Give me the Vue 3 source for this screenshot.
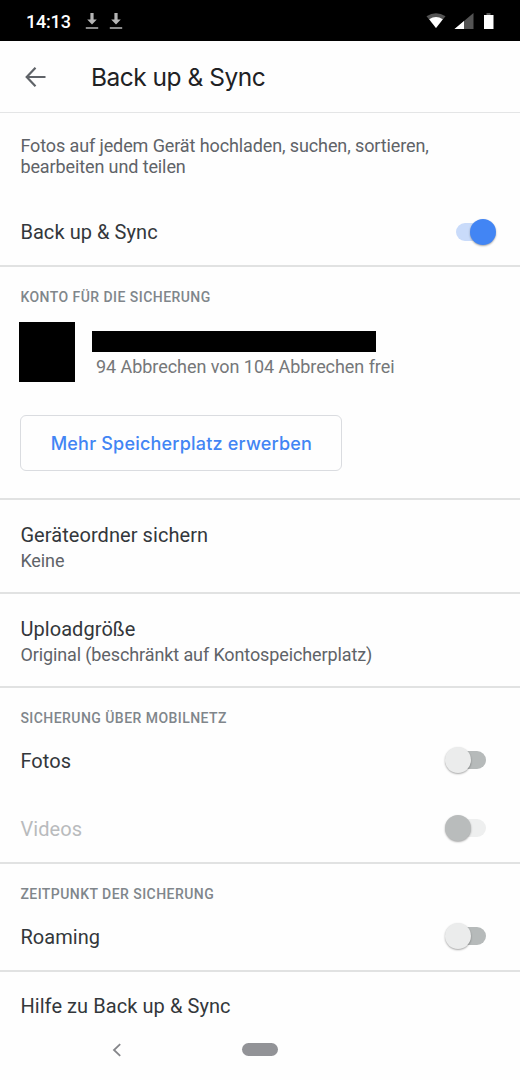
<script setup>
import { reactive } from 'vue'

const settings = reactive({
  backup: true,
  photos: false,
  videos: false,
  roaming: false
})

const folders = [
  { title: 'Geräteordner sichern', value: 'Keine' },
  { title: 'Uploadgröße', value: 'Original (beschränkt auf Kontospeicherplatz)' }
]
</script>

<template>
  <div class="screen">
    <div class="status-bar">
      <span class="clock">14:13</span>
      <svg v-for="n in 2" :key="n" class="download" width="14" height="18" viewBox="0 0 14 18">
        <path d="M5.400 1h3.200v6.600h3.200L7 12.400 2.200 7.600h3.200zM.8 15.200h12.400v1.500H.8z" fill="#b5b5b5" />
      </svg>
      <svg class="system-icons" width="70" height="18" viewBox="0 0 70 18">
        <path d="M.5 4.200Q10 -1.800 19.500 4.200L10 16z" fill="#545454" />
        <path d="M3.200 7.200Q10 3 16.800 7.200L10 16z" fill="#fff" />
        <path d="M28.500 17L47.500 1v16z" fill="#545454" />
        <path d="M28.500 17l9.500-8V17z" fill="#fff" />
        <path d="M60.500 1h4v2h-4z" fill="#545454" />
        <path d="M58 3h9.500v14H58z" fill="#fff" />
      </svg>
    </div>

    <header class="app-bar">
      <svg width="22" height="22" viewBox="0 0 22 22" fill="none" stroke="#5f6368" stroke-width="2.200">
        <path d="M20.500 11H2M10.500 1.800L1.700 11l8.800 9.200" />
      </svg>
      <h1>Back up &amp; Sync</h1>
    </header>

    <section class="intro">
      <p class="description">Fotos auf jedem Gerät hochladen, suchen, sortieren,<br>bearbeiten und teilen</p>
      <div class="row">
        <span class="label">Back up &amp; Sync</span>
        <button class="switch" :class="{ on: settings.backup }" aria-label="Back up &amp; Sync" @click="settings.backup = !settings.backup"></button>
      </div>
    </section>

    <section class="account">
      <h2>KONTO FÜR DIE SICHERUNG</h2>
      <div class="account-row">
        <span class="avatar"></span>
        <div class="account-info">
          <span class="account-name"></span>
          <span class="storage">94 Abbrechen von 104 Abbrechen frei</span>
        </div>
      </div>
      <button class="buy">Mehr Speicherplatz erwerben</button>
    </section>

    <section v-for="item in folders" :key="item.title" class="folder">
      <span class="label">{{ item.title }}</span>
      <span class="value">{{ item.value }}</span>
    </section>

    <section class="mobile">
      <h2>SICHERUNG ÜBER MOBILNETZ</h2>
      <div class="row">
        <span class="label">Fotos</span>
        <button class="switch" :class="{ on: settings.photos }" aria-label="Fotos" @click="settings.photos = !settings.photos"></button>
      </div>
      <div class="row disabled">
        <span class="label">Videos</span>
        <button class="switch" disabled aria-label="Videos"></button>
      </div>
    </section>

    <section class="timing">
      <h2>ZEITPUNKT DER SICHERUNG</h2>
      <div class="row">
        <span class="label">Roaming</span>
        <button class="switch" :class="{ on: settings.roaming }" aria-label="Roaming" @click="settings.roaming = !settings.roaming"></button>
      </div>
    </section>

    <div class="help">
      <span class="label">Hilfe zu Back up &amp; Sync</span>
    </div>

    <nav class="nav-bar">
      <svg width="10" height="14" viewBox="0 0 10 14" fill="none" stroke="#85868a" stroke-width="1.800">
        <path d="M8.200 1.200L2 7l6.200 5.800" />
      </svg>
      <span class="home-pill"></span>
    </nav>
  </div>
</template>

<style>
body {
  margin: 0;
  background: #fefefe;
}
</style>

<style scoped>
.screen {
  display: flex;
  flex-direction: column;
  width: 520px;
  height: 1080px;
  overflow: hidden;
  background: #fefefe;
  color: #33373b;
  font-family: Roboto, sans-serif;
}

.status-bar {
  display: flex;
  align-items: center;
  height: 41px;
  padding: 0 24px 0 26px;
  background: #000;
  box-sizing: border-box;
}

.clock {
  width: 59px;
  padding-top: 1px;
  color: #fff;
  font-size: 18px;
  font-weight: 500;
  letter-spacing: -0.2px;
}

.download {
  margin-right: 10px;
}

.system-icons {
  margin-left: auto;
}

.app-bar {
  display: flex;
  align-items: center;
  gap: 44px;
  height: 72px;
  padding-left: 25px;
  border-bottom: 1px solid #e4e5e6;
  box-sizing: border-box;
}

h1 {
  margin: 0;
  color: #202124;
  font-family: Inter, sans-serif;
  font-size: 24.500px;
  font-weight: 400;
  letter-spacing: -0.5px;
}

section {
  box-sizing: border-box;
  border-bottom: 2px solid #e1e2e2;
  padding: 0 20px 0 20.400px;
}

.intro {
  height: 154px;
}

.description {
  margin: 0;
  padding-top: 22px;
  color: #5f6368;
  font-size: 18px;
  line-height: 21px;
  letter-spacing: -0.11px;
}

.row {
  display: flex;
  align-items: center;
  justify-content: space-between;
  height: 68px;
  padding-right: 4px;
}

.intro .row {
  margin-top: 21px;
}

.label {
  font-size: 20px;
  line-height: 24px;
  letter-spacing: 0.07px;
}

.switch {
  display: flex;
  align-items: center;
  width: 51px;
  height: 26px;
  margin-top: -1px;
  padding: 0;
  border: 0;
  background: none;
  position: relative;
}

.mobile .switch,
.timing .switch {
  margin-top: -2px;
}

.switch::before {
  content: '';
  width: 30px;
  height: 18px;
  margin-left: 10.500px;
  border-radius: 9px;
  background: #b6baba;
}

.switch::after {
  content: '';
  position: absolute;
  left: 0;
  top: 0;
  width: 26px;
  height: 26px;
  border-radius: 50%;
  background: #ebecec;
  box-shadow: 0 1px 2px rgba(0, 0, 0, 0.35);
}

.switch.on::before {
  background: #c9dbfa;
}

.switch.on::after {
  left: 25px;
  background: #4285f4;
}

.switch:disabled::before {
  background: #eeefef;
}

.switch:disabled::after {
  background: #b9bcbc;
}

.disabled .label {
  color: #b9bbbd;
}

.account {
  height: 233px;
}

h2 {
  margin: 0;
  padding-top: 22px;
  color: #80868b;
  font-size: 14px;
  font-weight: 500;
  line-height: 17px;
  letter-spacing: 0.450px;
}

.account-row {
  display: flex;
  gap: 17px;
  margin: 16px 0 0 -1.400px;
}

.avatar {
  width: 56px;
  height: 60px;
  background: #000;
}

.account-info {
  display: flex;
  flex-direction: column;
  padding-top: 9px;
}

.account-name {
  width: 284px;
  height: 21px;
  background: #000;
}

.storage {
  padding: 4px 0 0 4px;
  color: #757779;
  font-size: 18px;
  line-height: 22px;
  letter-spacing: -0.05px;
}

.buy {
  display: block;
  width: 322px;
  height: 56px;
  margin-top: 33px;
  padding: 0;
  border: 1.500px solid #dadce0;
  border-radius: 6px;
  background: transparent;
  color: #4285f4;
  font-family: Inter, sans-serif;
  font-size: 18px;
  font-weight: 500;
  letter-spacing: 0.2px;
}

.folder {
  display: flex;
  flex-direction: column;
  height: 94px;
  padding-top: 23px;
}

.value {
  margin-top: 3px;
  color: #5f6368;
  font-size: 18px;
  line-height: 22px;
  letter-spacing: -0.11px;
}

.mobile {
  height: 176px;
}

.timing {
  height: 108px;
}

.help {
  padding: 22px 20.400px 0;
}

.nav-bar {
  display: flex;
  align-items: center;
  gap: 120px;
  height: 61px;
  margin-top: auto;
  padding-left: 112px;
  box-sizing: border-box;
}

.home-pill {
  width: 36px;
  height: 13px;
  border-radius: 7px;
  background: #929397;
}
</style>
